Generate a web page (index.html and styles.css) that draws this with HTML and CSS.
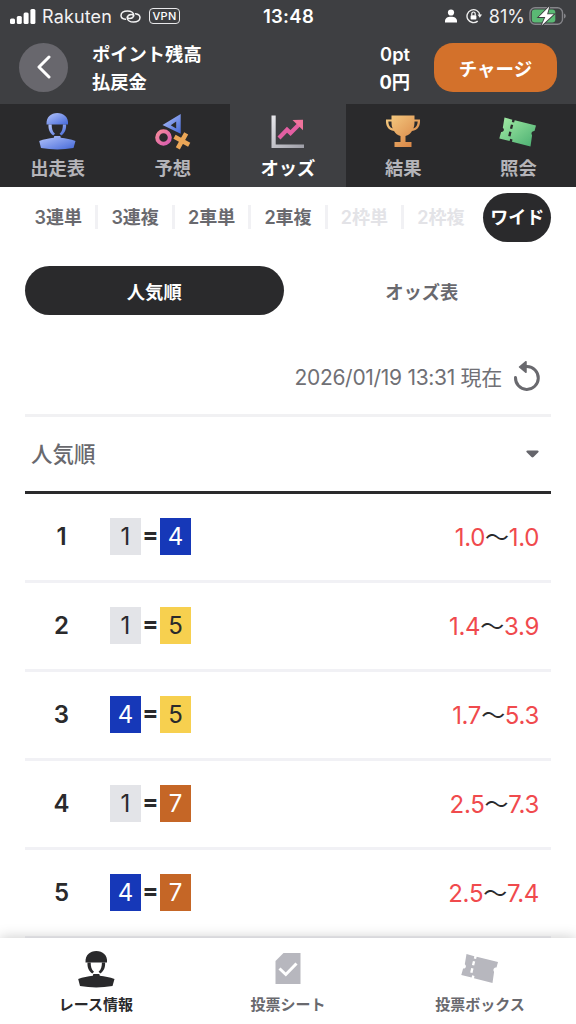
FILE: index.html
```html
<!DOCTYPE html>
<html lang="ja">
<head>
<meta charset="utf-8">
<title>オッズ</title>
<link rel="stylesheet" href="styles.css">
</head>
<body>
<svg class="defs" width="0" height="0">
  <defs>
    <linearGradient id="blue" x1="0" y1="0" x2="1" y2="1"><stop offset="0" stop-color="#b5c5fb"/><stop offset="1" stop-color="#4468d8"/></linearGradient>
    <linearGradient id="pink" x1="0" y1="0" x2="1" y2="1"><stop offset="0" stop-color="#f58a9a"/><stop offset="1" stop-color="#d95bb0"/></linearGradient>
    <linearGradient id="gold" x1="0" y1="0" x2="1" y2="1"><stop offset="0" stop-color="#f5cd83"/><stop offset="1" stop-color="#d67c3e"/></linearGradient>
    <linearGradient id="green" x1="0" y1="0" x2="1" y2="1"><stop offset="0" stop-color="#a5eda6"/><stop offset="1" stop-color="#48ad70"/></linearGradient>
    <linearGradient id="silver" x1="0" y1="0" x2="1" y2="1"><stop offset="0" stop-color="#e8e8ec"/><stop offset="1" stop-color="#9d9da6"/></linearGradient>
    <g id="rider">
      <path d="M7.500 12.500C7 5 12 1 18.300 1S29.700 5 29 12.500Z"/>
      <path d="M9.500 12.500h3.200c0 4 .7 7 3.300 9.300l-1.700 1.700C10.500 21 9.200 17 9.500 12.500ZM27.100 12.500h-3.200c0 4-.7 7-3.300 9.300l1.700 1.700c3.800-2.500 5.100-6.500 4.800-11Z" class="strap"/>
      <path d="M15.300 24h6l.5 1.700c5 .6 10 1.400 14.700 3.300L34.500 36c-11 1.900-21.500 1.900-32.500 0L.2 29c4.700-1.900 9.700-2.700 14.600-3.300Z"/>
    </g>
    <path id="ticket" d="M5.500 1 13.300 3.200 12.800 5.500l2.300.6.600-2.300L37 9l-1.500 5.600c-2.400-.1-4 2-2.400 4.200L31.500 30 13 25.200l.5-2.300-2.300-.6-.6 2.300L.3 22l1.800-6.500c2.500.3 4-2.500 1.700-4.300ZM11.900 8l-1 4 2.300.6 1-4ZM10.200 15l-1 4.500 2.300.6 1-4.500Z" fill-rule="evenodd"/>
  </defs>
</svg>
<div class="app">
  <header class="top">
    <div class="status">
      <div class="status-left">
        <svg class="signal" width="26" height="17" viewBox="0 0 26 17" fill="#fff"><rect y="10.500" width="5" height="5.500" rx="1.500"/><rect x="6.800" y="8" width="5" height="8" rx="1.500"/><rect x="13.600" y="4.500" width="5" height="11.500" rx="1.500"/><rect x="20.400" y="1" width="5" height="15" rx="1.500"/></svg>
        <span class="carrier">Rakuten</span>
        <svg class="link" width="21" height="13" viewBox="0 0 21 13" fill="none" stroke="#f4f4f5" stroke-width="1.500" stroke-linecap="round"><path d="M5.500 9.300C2.600 8.900 1 7.500 1 5.400 1 2.800 3.700.9 7.400.9c3.600 0 6.200 1.800 6.200 4.200 0 2.200-2 3.500-4.300 3.500-1.200 0-2-.6-2-1.500"/><path d="M15.500 3.700C18.400 4.100 20 5.500 20 7.600c0 2.600-2.700 4.500-6.400 4.500-3.600 0-6.200-1.800-6.200-4.200 0-2.200 2-3.500 4.300-3.500 1.200 0 2 .6 2 1.500"/></svg>
        <span class="vpn">VPN</span>
      </div>
      <span class="clock">13:48</span>
      <div class="status-right">
        <svg class="person" width="12" height="14" viewBox="0 0 12 14" fill="#fff"><circle cx="6" cy="3.500" r="3.100"/><path d="M0 13.500V12c0-2.700 2.500-4.200 6-4.200s6 1.500 6 4.200v1.500Z"/></svg>
        <svg class="lock" width="16" height="16" viewBox="0 0 16 16"><path d="M11.700 13.100A6.500 6.500 0 1 1 13.900 7" fill="none" stroke="#eee" stroke-width="1.400"/><path d="M11.500 6.600H16l-2.200 3.200Z" fill="#eee"/><rect x="4.600" y="7.200" width="5.800" height="4.300" rx=".8" fill="#fff"/><path d="M5.800 7.500V5.700a1.700 1.700 0 0 1 3.400 0v1.800" fill="none" stroke="#fff" stroke-width="1.200"/></svg>
        <span class="percent">81%</span>
        <svg class="battery" width="38" height="20" viewBox="0 0 38 20"><rect x="1" y="1.700" width="32.500" height="16.600" rx="5" fill="none" stroke="#85858a" stroke-width="1.400"/><path d="M35 7.500c2.300.8 2.300 4.200 0 5Z" fill="#85858a"/><rect x="2.800" y="3.500" width="23.500" height="13" rx="3" fill="#5ab974"/><path d="M20.300.5 9.800 11h6.500l-3.700 8.500L24.700 8.300h-6.600Z" fill="#fff" stroke="#3e3f42" stroke-width="1.800" paint-order="stroke"/></svg>
      </div>
    </div>
    <div class="account">
      <button class="back"><svg width="14" height="24" viewBox="0 0 14 24" fill="none" stroke="#fff" stroke-width="3" stroke-linecap="round" stroke-linejoin="round"><path d="M12 2 2 12l10 10"/></svg></button>
      <div class="labels"><span>ポイント残高</span><span>払戻金</span></div>
      <div class="amounts"><span>0pt</span><span>0円</span></div>
      <button class="charge">チャージ</button>
    </div>
  </header>

  <nav class="tabs">
    <a class="tab"><svg width="37" height="38" viewBox="0 0 37 38" fill="url(#blue)" class="rider-blue"><use href="#rider"/></svg><span>出走表</span></a>
    <a class="tab"><svg width="38" height="38" viewBox="0 0 38 38" fill="none"><path d="M8.500 13 26.700 2v19.800Zm8.200.2 5.500 3.300V9.500Z" fill="url(#blue)" fill-rule="evenodd"/><circle cx="9.500" cy="25.500" r="6.300" stroke="url(#pink)" stroke-width="4"/><path d="m20.500 24.800 14.700 7.900M32.200 21.300l-8.400 15" stroke="#eba657" stroke-width="4.600"/></svg><span>予想</span></a>
    <a class="tab tab-on"><svg width="36" height="38" viewBox="0 0 36 38"><path d="M1.500 3.500h4.200V32.500H34V36H1.500Z" fill="url(#silver)"/><path d="m9 26 8-8.200 3.500 3.300 8.500-8.500" fill="none" stroke="#e35fa2" stroke-width="4.200"/><path d="M22.500 8 33 7.700v10.600Z" fill="#f0739c"/></svg><span>オッズ</span></a>
    <a class="tab"><svg width="36" height="38" viewBox="0 0 36 38" fill="url(#gold)"><path d="M6.500 3.500h23v4H35c.5 6-2 11-8 11.500-1.500 2.600-3.600 4.200-6.500 5v6h6V35h-17v-5h6v-6c-2.900-.8-5-2.400-6.500-5C3 18.500.5 13.500 1 7.500h5.500ZM3.300 9.500c.2 3.500 1.400 6 4.400 7.100C6.800 14.500 6.500 12.500 6.500 9.500Zm26.200 0c0 3-.3 5-1.200 7.100 3-1.100 4.200-3.600 4.400-7.100Z" fill-rule="evenodd"/></svg><span>結果</span></a>
    <a class="tab"><svg width="38" height="38" viewBox="0 -4.500 38 38" fill="url(#green)"><use href="#ticket"/></svg><span>照会</span></a>
  </nav>

  <main class="content">
    <div class="bets">
      <a>3連単</a><a>3連複</a><a>2車単</a><a>2車複</a><a class="off">2枠単</a><a class="off">2枠複</a><a class="bet-on"><span>ワイド</span></a>
    </div>
    <div class="toggle"><button class="toggle-on">人気順</button><button>オッズ表</button></div>
    <div class="updated"><span>2026/01/19 13:31 現在</span><svg width="28" height="32" viewBox="0 0 28 32"><path d="M2.500 17.500A11.400 11.400 0 1 0 14 6.600h-2" fill="none" stroke="#69696e" stroke-width="3" stroke-linecap="round"/><path d="m6.500 7 6.500-5.300v10.600Z" fill="#69696e" stroke="#69696e" stroke-width="1.500" stroke-linejoin="round"/></svg></div>
    <div class="sort"><span>人気順</span><svg width="13" height="8" viewBox="0 0 13 8"><path d="M1.500.5h10c1 0 1.500 1 .8 1.700L7.500 7c-.6.6-1.400.6-2 0L.7 2.200C0 1.500.5.500 1.500.5Z" fill="#65656b"/></svg></div>
    <div class="row"><b class="rank">1</b><i class="n n1">1</i><b class="eq">=</b><i class="n n4">4</i><span class="odds">1.0<em>〜</em>1.0</span></div>
    <div class="row"><b class="rank">2</b><i class="n n1">1</i><b class="eq">=</b><i class="n n5">5</i><span class="odds">1.4<em>〜</em>3.9</span></div>
    <div class="row"><b class="rank">3</b><i class="n n4">4</i><b class="eq">=</b><i class="n n5">5</i><span class="odds">1.7<em>〜</em>5.3</span></div>
    <div class="row"><b class="rank">4</b><i class="n n1">1</i><b class="eq">=</b><i class="n n7">7</i><span class="odds">2.5<em>〜</em>7.3</span></div>
    <div class="row"><b class="rank">5</b><i class="n n4">4</i><b class="eq">=</b><i class="n n7">7</i><span class="odds">2.5<em>〜</em>7.4</span></div>
  </main>

  <nav class="bottom">
    <a class="on"><svg width="37" height="38" viewBox="0 0 37 38" fill="#29292b"><use href="#rider"/></svg><span>レース情報</span></a>
    <a><svg width="26" height="38" viewBox="0 0 26 38"><path d="M8.500 3H25.500v31H.5V11Z" fill="#b7b7be"/><path d="m4.500 18.500 6.300 6L21.500 13.500" fill="none" stroke="#fff" stroke-width="3"/></svg><span>投票シート</span></a>
    <a><svg width="38" height="38" viewBox="0 -3 38 38" fill="#b7b7be"><use href="#ticket"/></svg><span>投票ボックス</span></a>
  </nav>
</div>
</body>
</html>
```
FILE: styles.css
```css
* { box-sizing: border-box; }
body {
  margin: 0;
  font-family: Inter, "Noto Sans CJK JP", sans-serif;
  color: #2a2a2c;
  background: #fff;
}
button { border: 0; padding: 0; background: none; font: inherit; color: inherit; }
svg { display: block; flex: none; }
.defs { position: absolute; }
.app { width: 576px; height: 1024px; display: flex; flex-direction: column; overflow: hidden; }

.top { height: 104px; flex: none; background: #3e3f42; color: #fff; }
.status { height: 32px; display: grid; grid-template-columns: 1fr auto 1fr; align-items: center; padding: 0 9px 0 10px; }
.status-left, .status-right { display: flex; align-items: center; }
.status-right { justify-content: flex-end; }
.carrier { margin-left: 6px; width: 70px; font-size: 18px; letter-spacing: .15px; color: #f2f2f3; }
.link { margin-left: 8px; }
.vpn { margin-left: 8px; width: 31px; height: 16px; border: 1.500px solid #e8e8ea; border-radius: 4px; font-size: 11px; line-height: 14px; font-weight: 500; text-align: center; letter-spacing: .3px; }
.clock { font-size: 18.500px; font-weight: 600; letter-spacing: .3px; }
.lock { margin-left: 9px; }
.percent { margin-left: 7px; font-size: 18px; color: #f0f0f1; }
.battery { margin-left: 4px; }

.account { height: 72px; display: flex; align-items: center; padding: 0 19px 2px; font-size: 18.300px; font-weight: 700; }
.back { width: 49px; height: 49px; border-radius: 50%; background: #68676d; display: grid; place-items: center; }
.labels, .amounts { display: flex; flex-direction: column; line-height: 28px; padding-top: 2px; }
.labels { margin-left: 24px; }
.amounts { margin-left: auto; text-align: right; font-weight: 600; }
.amounts span:last-child { font-weight: 700; }
.charge { width: 123px; height: 49px; margin-left: 24px; border-radius: 19px; background: #d3712b; font-size: 18.500px; padding-top: 1px; }

.tabs { height: 83px; flex: none; display: grid; grid-template-columns: repeat(5, 1fr); background: #2a2a2c; color: #b4b4b9; font-size: 18.300px; font-weight: 700; }
.tab { display: flex; flex-direction: column; align-items: center; padding-top: 8px; }
.tab span { line-height: 28px; margin-top: 4px; }
.tab-on { background: #3e3f42; color: #fff; }
.rider-blue .strap { fill: #cfd5f5; }
.rider-blue { overflow: visible; }

.content { flex: 1; min-height: 0; overflow: hidden; padding: 0 25px; }
.bets { display: grid; grid-template-columns: repeat(7, 1fr); height: 60px; margin: 0 -3px 0 -6px; align-items: center; font-size: 18px; font-weight: 600; color: #69696e; }
.bets a { height: 24px; line-height: 26px; text-align: center; white-space: nowrap; }
.bets a:first-child { padding-left: 2px; }
.bets a + a { border-left: 3px solid #f1f1f4; }
.bets .off { color: #e3e3e7; }
.bets .bet-on { height: 49px; border: 0; display: flex; justify-content: center; padding-left: 3px; }
.bet-on span { width: 68px; height: 49px; line-height: 50px; border-radius: 25px; background: #2a2a2c; color: #fff; flex: none; }
.toggle { display: grid; grid-template-columns: 1fr 1fr; column-gap: 9px; height: 49px; margin-top: 19px; font-size: 18.300px; font-weight: 700; color: #69696e; }
.toggle-on { border-radius: 25px; background: #2a2a2c; color: #fff; }
.updated { height: 102px; padding: 22px 10px 0 0; display: flex; justify-content: flex-end; align-items: center; gap: 11px; border-bottom: 3px solid #f1f1f3; font-size: 21px; letter-spacing: -.3px; color: #707075; }
.sort { height: 76.500px; padding: 0 12px 0 6px; display: flex; justify-content: space-between; align-items: center; border-bottom: 3px solid #2a2a2c; font-size: 21.500px; font-weight: 500; color: #69696e; }
.sort span { padding-bottom: 2px; }
.row { height: 89px; display: flex; align-items: center; border-bottom: 3px solid #f1f1f5; padding-right: 12px; font-size: 24px; }
.rank { width: 73px; text-align: center; font-weight: 600; margin-right: 12px; }
.n { width: 31px; height: 37px; font-style: normal; text-align: center; line-height: 37px; }
.eq { width: 19px; text-align: center; font-weight: 700; padding-bottom: 4px; }
.n1 { background: #e3e4e8; }
.n4 { background: #1638b8; color: #fff; }
.n5 { background: #f7d04f; }
.n7 { background: #c56626; color: #fff; }
.odds { margin-left: auto; padding-bottom: 2px; color: #f04a4d; letter-spacing: -.3px; }
.odds em { font-style: normal; color: #2a2a2c; }

.bottom { position: relative; height: 86px; flex: none; display: grid; grid-template-columns: repeat(3, 1fr); background: #fff; box-shadow: 0 0 13px rgba(0, 0, 0, .22); color: #69696e; font-size: 15px; font-weight: 700; }
.bottom a { display: flex; flex-direction: column; align-items: center; padding-top: 12px; }
.bottom span { line-height: 24px; margin-top: 5px; }
.bottom .on { color: #2a2a2c; }
```
